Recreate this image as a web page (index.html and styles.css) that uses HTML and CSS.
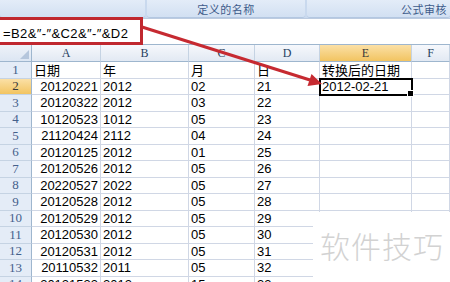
FILE: index.html
```html
<!DOCTYPE html>
<html lang="zh-CN">
    <head>
        <meta charset="UTF-8" />
        <title>转换后的日期</title>
        <link rel="stylesheet" href="styles.css">
    </head>
    <body>
        <div class="window">
            <div class="ribbon">
                <div class="group group-first"><span></span></div>
                <div class="group group-names"><span>定义的名称</span></div>
                <div class="group group-audit"><span>公式审核</span></div>
            </div>
            <div class="formula-bar">
                <span class="formula">=B2&amp;″-″&amp;C2&amp;″-″&amp;D2</span>
            </div>
            <div class="sheet">
                <div class="corner"></div>
                <div class="col-head">A</div>
                <div class="col-head">B</div>
                <div class="col-head">C</div>
                <div class="col-head">D</div>
                <div class="col-head active">E</div>
                <div class="col-head">F</div>

                <div class="row-head">1</div>
                <div class="cell">日期</div>
                <div class="cell">年</div>
                <div class="cell">月</div>
                <div class="cell">日</div>
                <div class="cell">转换后的日期</div>
                <div class="cell"></div>

                <div class="row-head active">2</div>
                <div class="cell num">20120221</div>
                <div class="cell">2012</div>
                <div class="cell">02</div>
                <div class="cell">21</div>
                <div class="cell selected">2012-02-21</div>
                <div class="cell"></div>

                <div class="row-head">3</div>
                <div class="cell num">20120322</div>
                <div class="cell">2012</div>
                <div class="cell">03</div>
                <div class="cell">22</div>
                <div class="cell"></div>
                <div class="cell"></div>

                <div class="row-head">4</div>
                <div class="cell num">10120523</div>
                <div class="cell">1012</div>
                <div class="cell">05</div>
                <div class="cell">23</div>
                <div class="cell"></div>
                <div class="cell"></div>

                <div class="row-head">5</div>
                <div class="cell num">21120424</div>
                <div class="cell">2112</div>
                <div class="cell">04</div>
                <div class="cell">24</div>
                <div class="cell"></div>
                <div class="cell"></div>

                <div class="row-head">6</div>
                <div class="cell num">20120125</div>
                <div class="cell">2012</div>
                <div class="cell">01</div>
                <div class="cell">25</div>
                <div class="cell"></div>
                <div class="cell"></div>

                <div class="row-head">7</div>
                <div class="cell num">20120526</div>
                <div class="cell">2012</div>
                <div class="cell">05</div>
                <div class="cell">26</div>
                <div class="cell"></div>
                <div class="cell"></div>

                <div class="row-head">8</div>
                <div class="cell num">20220527</div>
                <div class="cell">2022</div>
                <div class="cell">05</div>
                <div class="cell">27</div>
                <div class="cell"></div>
                <div class="cell"></div>

                <div class="row-head">9</div>
                <div class="cell num">20120528</div>
                <div class="cell">2012</div>
                <div class="cell">05</div>
                <div class="cell">28</div>
                <div class="cell"></div>
                <div class="cell"></div>

                <div class="row-head">10</div>
                <div class="cell num">20120529</div>
                <div class="cell">2012</div>
                <div class="cell">05</div>
                <div class="cell">29</div>
                <div class="cell"></div>
                <div class="cell"></div>

                <div class="row-head">11</div>
                <div class="cell num">20120530</div>
                <div class="cell">2012</div>
                <div class="cell">05</div>
                <div class="cell">30</div>
                <div class="cell"></div>
                <div class="cell"></div>

                <div class="row-head">12</div>
                <div class="cell num">20120531</div>
                <div class="cell">2012</div>
                <div class="cell">05</div>
                <div class="cell">31</div>
                <div class="cell"></div>
                <div class="cell"></div>

                <div class="row-head">13</div>
                <div class="cell num">20110532</div>
                <div class="cell">2011</div>
                <div class="cell">05</div>
                <div class="cell">32</div>
                <div class="cell"></div>
                <div class="cell"></div>

                <div class="row-head">14</div>
                <div class="cell num">20121533</div>
                <div class="cell">2012</div>
                <div class="cell">15</div>
                <div class="cell">33</div>
                <div class="cell"></div>
                <div class="cell"></div>
            </div>

            <!-- annotations drawn over the screenshot -->
            <div class="formula-box"></div>
            <svg class="arrow" width="450" height="282" viewBox="0 0 450 282">
                <line x1="142" y1="27" x2="310" y2="80" stroke="#c62a31" stroke-width="3" />
                <polygon points="322,84 311.5,74 307.5,86" fill="#c62a31" />
            </svg>
            <div class="watermark">软件技巧</div>
        </div>
    </body>
</html>
```

FILE: styles.css
```css
* {
    box-sizing: border-box;
    margin: 0;
    padding: 0;
}

body {
    width: 450px;
    height: 282px;
    overflow: hidden;
    background-color: #ffffff;
    font-family: "Liberation Sans", "Noto Sans CJK SC", sans-serif;
    color: #000000;
}

.window {
    position: relative;
    width: 450px;
    height: 282px;
    overflow: hidden;
}

/* ribbon group labels */
.ribbon {
    display: flex;
    height: 18px;
    background-color: #c9d9ee;
    gap: 2px;
}
.group {
    display: flex;
    align-items: center;
    justify-content: center;
    background: linear-gradient(#e3ecf8, #d2e0f2);
    border-bottom: 1px solid #b3c7e1;
    border-radius: 0 0 3px 3px;
    font-size: 11px;
    color: #3d5b8a;
    letter-spacing: 0.5px;
}
.group-first {
    width: 145px;
}
.group-names {
    width: 158px;
}
.group-audit {
    flex: 1;
    justify-content: flex-end;
    padding-right: 3px;
}

/* formula bar */
.formula-bar {
    display: flex;
    align-items: center;
    height: 27px;
    padding-left: 3px;
    padding-top: 3px;
    background-color: #ffffff;
    border-top: 1px solid #bccbe0;
    border-bottom: 1px solid #9eb6ce;
}
.formula {
    font-size: 13px;
    letter-spacing: 0.4px;
}

/* worksheet grid */
.sheet {
    display: grid;
    grid-template-columns: 32px 69px 88px 66px 65px 92px 1fr;
    grid-template-rows: 17px repeat(14, 16.5px);
    font-size: 13px;
}
.corner {
    position: relative;
    background: linear-gradient(#eef2f8, #dce6f3);
    border-right: 1px solid #9eb6ce;
    border-bottom: 1px solid #9eb6ce;
}
.corner::after {
    content: "";
    position: absolute;
    right: 2px;
    bottom: 2px;
    border-left: 9px solid transparent;
    border-bottom: 9px solid #b5c6dc;
}
.col-head {
    display: flex;
    align-items: center;
    justify-content: center;
    background: linear-gradient(#f6f8fc, #e2e9f3);
    border-right: 1px solid #c5d3e3;
    border-bottom: 1px solid #9eb6ce;
    font-family: "Liberation Serif", serif;
    font-size: 12px;
    color: #27415f;
}
.row-head {
    display: flex;
    align-items: center;
    justify-content: center;
    background-color: #e4ecf7;
    border-right: 1px solid #9eb6ce;
    border-bottom: 1px solid #c5d3e3;
    font-family: "Liberation Serif", serif;
    color: #44608b;
}
.col-head.active,
.row-head.active {
    background: linear-gradient(#fbe0a6, #f2c461);
    color: #3a3a3a;
}
.cell {
    display: flex;
    align-items: center;
    padding-left: 2px;
    white-space: nowrap;
    overflow: visible;
    border-right: 1px solid #d0d7e5;
    border-bottom: 1px solid #d0d7e5;
}
.cell.num {
    justify-content: flex-end;
    padding-right: 2px;
}
.cell.selected {
    position: relative;
    outline: 2px solid #000000;
    outline-offset: -1px;
}
.cell.selected::after {
    content: "";
    position: absolute;
    right: -3px;
    bottom: -3px;
    width: 5px;
    height: 5px;
    background-color: #000000;
    border: 1px solid #ffffff;
}

/* red annotation box around the formula */
.formula-box {
    position: absolute;
    left: -3px;
    top: 17px;
    width: 146px;
    height: 28px;
    border: 3px solid #c0282f;
}
.arrow {
    position: absolute;
    left: 0;
    top: 0;
    pointer-events: none;
}

.watermark {
    position: absolute;
    left: 313px;
    top: 212px;
    right: 0;
    bottom: 0;
    padding: 18px 0 0 7px;
    background-color: #ffffff;
    font-size: 30px;
    font-weight: 300;
    line-height: 1;
    color: #d2d2d2;
    letter-spacing: 1px;
    font-family: "Noto Sans CJK SC", sans-serif;
}
```
